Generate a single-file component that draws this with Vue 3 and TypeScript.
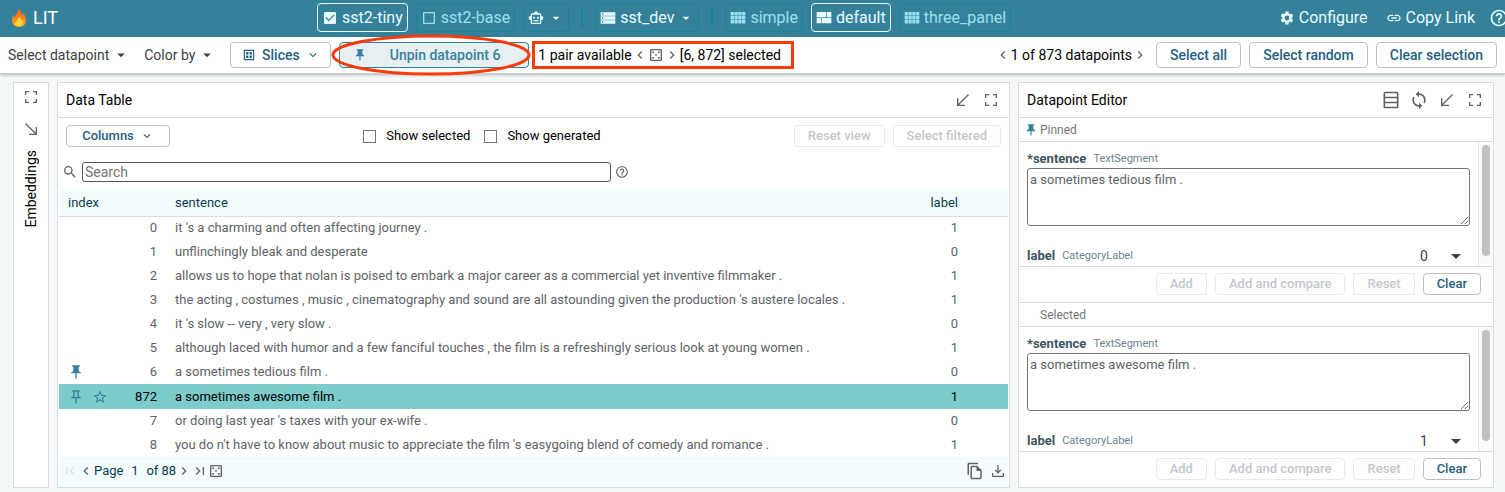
<script setup lang="ts">
import { h, ref } from 'vue'

const paths: Record<string, string> = {
  checked: 'M19 3H5c-1.1 0-2 .9-2 2v14c0 1.1.9 2 2 2h14c1.1 0 2-.9 2-2V5c0-1.1-.9-2-2-2zm-9 14l-5-5 1.4-1.4L10 14.2l7.600-7.600L19 8l-9 9z',
  unchecked: 'M19 5v14H5V5h14m0-2H5c-1.1 0-2 .9-2 2v14c0 1.1.9 2 2 2h14c1.1 0 2-.9 2-2V5c0-1.1-.9-2-2-2z',
  robot: 'M20 9V7c0-1.1-.9-2-2-2h-3c0-1.66-1.34-3-3-3S9 3.34 9 5H6c-1.1 0-2 .9-2 2v2c-1.66 0-3 1.34-3 3s1.34 3 3 3v4c0 1.1.9 2 2 2h12c1.1 0 2-.9 2-2v-4c1.66 0 3-1.34 3-3s-1.34-3-3-3zm-2 10H6V7h12v12zM9 13a1.5 1.5 0 1 1 0-3 1.5 1.5 0 0 1 0 3zm7.5-1.5a1.5 1.5 0 1 1-3 0 1.5 1.5 0 0 1 3 0zM8 15h8v2H8v-2z',
  storage: 'M1 20.5h22v-5H1v5zm2-3.5h2v2H3v-2zM1 3.5v5h22v-5H1zM5 7H3V5h2v2zM1 14.5h22v-5H1v5zm2-3.5h2v2H3v-2z',
  comfy: 'M1 3h4.900v5.200H1zM6.700 3h4.900v5.200H6.700zM12.400 3h4.900v5.200h-4.900zM18.100 3H23v5.200h-4.900zM1 9h4.900v5.200H1zM6.700 9h4.900v5.200H6.700zM12.400 9h4.900v5.200h-4.900zM18.100 9H23v5.200h-4.900zM1 15h4.900v5.200H1zM6.700 15h4.900v5.200H6.700zM12.400 15h4.900v5.200h-4.900zM18.100 15H23v5.200h-4.900z',
  quilt: 'M1 20h7v-8H1v8zm8 0h14v-8H9v8zM1 3v8h14V3H1zm15 0v8h7V3h-7z',
  gear: 'M19.14 12.94c.04-.3.06-.61.06-.94 0-.32-.02-.64-.07-.94l2.03-1.58c.18-.14.23-.41.12-.61l-1.92-3.32c-.12-.22-.37-.29-.59-.22l-2.39.96c-.5-.38-1.03-.7-1.62-.94l-.36-2.54c-.04-.24-.24-.41-.48-.41h-3.84c-.24 0-.43.17-.47.41l-.36 2.54c-.59.24-1.13.57-1.62.94l-2.39-.96c-.22-.08-.47 0-.59.22L2.74 8.87c-.12.21-.08.47.12.61l2.03 1.58c-.05.3-.09.63-.09.94s.02.64.07.94l-2.03 1.58c-.18.14-.23.41-.12.61l1.92 3.32c.12.22.37.29.59.22l2.39-.96c.5.38 1.03.7 1.62.94l.36 2.54c.05.24.24.41.48.41h3.84c.24 0 .44-.17.47-.41l.36-2.54c.59-.24 1.13-.56 1.62-.94l2.39.96c.22.08.47 0 .59-.22l1.92-3.32c.12-.22.07-.47-.12-.61l-2.01-1.58zM12 15.6A3.6 3.6 0 1 1 12 8.4a3.6 3.6 0 0 1 0 7.2z',
  link: 'M3.9 12c0-1.71 1.39-3.1 3.1-3.1h4V7H7c-2.76 0-5 2.24-5 5s2.24 5 5 5h4v-1.9H7c-1.71 0-3.1-1.39-3.1-3.1zM8 13h8v-2H8v2zm9-6h-4v1.900h4c1.710 0 3.100 1.390 3.100 3.100s-1.390 3.100-3.100 3.100h-4V17h4c2.760 0 5-2.240 5-5s-2.240-5-5-5z',
  help: 'M11 18h2v-2h-2v2zm1-16C6.480 2 2 6.480 2 12s4.480 10 10 10 10-4.480 10-10S17.520 2 12 2zm0 18c-4.410 0-8-3.590-8-8s3.590-8 8-8 8 3.590 8 8-3.590 8-8 8zm0-14c-2.210 0-4 1.790-4 4h2c0-1.100.9-2 2-2s2 .9 2 2c0 2-3 1.750-3 5h2c0-2.250 3-2.500 3-5 0-2.210-1.790-4-4-4z',
  drop: 'M7 10l5 5 5-5z',
  down: 'M7.4 8.6L12 13.2l4.6-4.6L18 10l-6 6-6-6z',
  left: 'M15.4 7.4L14 6l-6 6 6 6 1.4-1.4L10.8 12z',
  right: 'M10 6L8.6 7.4l4.6 4.6-4.6 4.6L10 18l6-6z',
  first: 'M18.4 16.6L13.8 12l4.6-4.6L17 6l-6 6 6 6zM6 6h2v12H6z',
  last: 'M5.6 7.4l4.6 4.6-4.6 4.6L7 18l6-6-6-6zM16 6h2v12h-2z',
  slices: 'M3 3v18h18V3H3zm16 16H5V5h14v14zM7 7h4v4H7V7zm6 0h4v4h-4V7zM7 13h4v4H7v-4zm6 0h4v4h-4v-4z',
  pin: 'M16 9V4h1c.55 0 1-.45 1-1s-.45-1-1-1H7c-.55 0-1 .45-1 1s.45 1 1 1h1v5c0 1.66-1.34 3-3 3v2h5.97v7l1 1 1-1v-7H19v-2c-1.66 0-3-1.34-3-3z',
  pinOutline: 'M14 4v5c0 1.12.37 2.16 1 3H9c.65-.86 1-1.9 1-3V4h4m3-2H7c-.55 0-1 .45-1 1s.45 1 1 1h1v5c0 1.66-1.34 3-3 3v2h5.97v7l1 1 1-1v-7H19v-2c-1.66 0-3-1.34-3-3V4h1c.55 0 1-.45 1-1s-.45-1-1-1z',
  star: 'M22 9.24l-7.19-.62L12 2 9.19 8.63 2 9.24l5.46 4.73L5.82 21 12 17.27 18.18 21l-1.63-7.03L22 9.24zM12 15.4l-3.76 2.27 1-4.28-3.32-2.88 4.38-.38L12 6.1l1.71 4.04 4.38.38-3.32 2.88 1 4.28L12 15.4z',
  dice: 'M19 3H5c-1.1 0-2 .9-2 2v14c0 1.1.9 2 2 2h14c1.1 0 2-.9 2-2V5c0-1.1-.9-2-2-2zm0 16H5V5h14v14zM6.5 6.5h2.4v2.4H6.5zM15.1 6.5h2.4v2.4h-2.4zM10.8 10.8h2.4v2.4h-2.4zM6.5 15.1h2.4v2.4H6.5zM15.1 15.1h2.4v2.4h-2.4z',
  full: 'M3 3h6v2H5v4H3V3zm12 0h6v6h-2V5h-4V3zM3 15h2v4h4v2H3v-6zm16 0h2v6h-6v-2h4v-4z',
  shrink: 'M21 4.400L19.600 3 5 17.600V9H3v12h12v-2H6.400z',
  grow: 'M3 4.400L4.400 3 19 17.600V9h2v12H9v-2h8.600z',
  rows: 'M19 2H5c-1.1 0-2 .9-2 2v16c0 1.1.9 2 2 2h14c1.1 0 2-.9 2-2V4c0-1.1-.9-2-2-2zm0 2v4H5V4h14zM5 10h14v4H5v-4zm0 10v-4h14v4H5z',
  sync: 'M12 4V1L8 5l4 4V6c3.31 0 6 2.69 6 6 0 1.01-.25 1.97-.7 2.8l1.46 1.46A7.93 7.93 0 0 0 20 12c0-4.42-3.58-8-8-8zm0 14c-3.31 0-6-2.69-6-6 0-1.01.25-1.97.7-2.8L5.24 7.74A7.93 7.93 0 0 0 4 12c0 4.42 3.58 8 8 8v3l4-4-4-4v3z',
  search: 'M15.5 14h-.79l-.28-.27A6.47 6.47 0 0 0 16 9.5 6.5 6.5 0 1 0 9.5 16c1.61 0 3.09-.59 4.23-1.57l.27.28v.79l5 4.99L20.49 19l-4.99-5zm-6 0a4.5 4.5 0 1 1 0-9 4.5 4.5 0 0 1 0 9z',
  copy: 'M16 1H4c-1.1 0-2 .9-2 2v14h2V3h12V1zm-1 4l6 6v10c0 1.1-.9 2-2 2H8c-1.1 0-2-.9-2-2V7c0-1.1.9-2 2-2h7zM8 7v14h11v-9h-5V7H8z',
  download: 'M19 15v4H5v-4H3v4c0 1.1.9 2 2 2h14c1.1 0 2-.9 2-2v-4h-2zm-2-4l-1.4-1.4-2.6 2.6V3h-2v9.2L8.4 9.6 7 11l5 5 5-5z',
}

const Icon = (props: { name: string; size?: number }) =>
  h('svg', { viewBox: '0 0 24 24', width: props.size ?? 16, height: props.size ?? 16, fill: 'currentColor', 'fill-rule': 'evenodd', 'aria-hidden': 'true' }, [
    h('path', { d: paths[props.name] }),
  ])
Icon.props = ['name', 'size']

interface Row { index: number; sentence: string; label: number; pinned?: boolean; selected?: boolean }
const rows: Row[] = [
  { index: 0, sentence: "it 's a charming and often affecting journey .", label: 1 },
  { index: 1, sentence: 'unflinchingly bleak and desperate', label: 0 },
  { index: 2, sentence: 'allows us to hope that nolan is poised to embark a major career as a commercial yet inventive filmmaker .', label: 1 },
  { index: 3, sentence: "the acting , costumes , music , cinematography and sound are all astounding given the production 's austere locales .", label: 1 },
  { index: 4, sentence: "it 's slow -- very , very slow .", label: 0 },
  { index: 5, sentence: 'although laced with humor and a few fanciful touches , the film is a refreshingly serious look at young women .', label: 1 },
  { index: 6, sentence: 'a sometimes tedious film .', label: 0, pinned: true },
  { index: 872, sentence: 'a sometimes awesome film .', label: 1, selected: true },
  { index: 7, sentence: "or doing last year 's taxes with your ex-wife .", label: 0 },
  { index: 8, sentence: "you do n't have to know about music to appreciate the film 's easygoing blend of comedy and romance .", label: 1 },
]

const editors = ref([
  { id: 'pinned', title: 'Pinned', pinned: true, sentence: 'a sometimes tedious film .', label: '0' },
  { id: 'selected', title: 'Selected', pinned: false, sentence: 'a sometimes awesome film .', label: '1' },
])
const search = ref('')
const page = ref('1')
const showSelected = ref(false)
const showGenerated = ref(false)
</script>

<template>
  <div class="app">
    <header class="topbar">
      <div class="brand">
        <svg class="flame" viewBox="0 0 16 20" width="16" height="20" aria-hidden="true">
          <defs>
            <linearGradient id="flame-outer" x1="0" y1="0" x2="0" y2="1">
              <stop offset="0" stop-color="#f0641e" />
              <stop offset="0.6" stop-color="#f98a1c" />
              <stop offset="1" stop-color="#f6a623" />
            </linearGradient>
          </defs>
          <path fill="url(#flame-outer)" d="M7 1c3 1.500 4 4 4 6.500.8-.5 1-1.500.9-2.500C14 7 15 9.500 15 12.500c0 4-3 6.500-7 6.500s-7-2.500-7-6.300C1 10 2 8 3 6.500c0 1.500.4 2.500 1.200 3C4.500 6 7.500 4.500 7 1z" />
          <path fill="#ffd83d" d="M8.200 8c.3 2 2.600 3 2.600 5 .5-.3.8-.8.8-1.500 1.200 2.500 1.200 6.700-3.600 6.700-3.400 0-4.800-2.200-4.300-5 .4.8.9 1.300 1.500 1.400C5 12 8 11 8.200 8z" />
        </svg>
        <span>LIT</span>
      </div>
      <nav class="picks" aria-label="Models, dataset and layout">
        <button type="button" class="pick on" aria-pressed="true"><Icon name="checked" />sst2-tiny</button>
        <button type="button" class="pick" aria-pressed="false"><Icon name="unchecked" />sst2-base</button>
        <button type="button" class="pick bright" aria-label="Models"><Icon name="robot" /><Icon name="drop" /></button>
        <span class="bar"></span>
        <button type="button" class="pick bright" aria-haspopup="true"><Icon name="storage" />sst_dev<Icon name="drop" /></button>
        <span class="bar"></span>
        <button type="button" class="pick" aria-pressed="false"><Icon name="comfy" />simple</button>
        <button type="button" class="pick on" aria-pressed="true"><Icon name="quilt" />default</button>
        <button type="button" class="pick" aria-pressed="false"><Icon name="comfy" />three_panel</button>
      </nav>
      <div class="global">
        <button type="button" class="plain"><Icon name="gear" />Configure</button>
        <button type="button" class="plain"><Icon name="link" />Copy Link</button>
        <button type="button" class="plain" aria-label="Help"><Icon name="help" :size="20" /></button>
      </div>
    </header>

    <div class="toolbar">
      <button type="button" class="menu" aria-haspopup="true">Select datapoint<Icon name="drop" :size="18" /></button>
      <button type="button" class="menu" aria-haspopup="true">Color by<Icon name="drop" :size="18" /></button>
      <button type="button" class="btn slices" aria-haspopup="true"><Icon name="slices" :size="14" />Slices<Icon name="down" :size="14" /></button>
      <div class="pin-wrap">
        <button type="button" class="btn unpin"><Icon name="pin" :size="14" /><span>Unpin datapoint 6</span></button>
        <svg class="ring" viewBox="0 0 200 42" aria-hidden="true"><ellipse cx="100" cy="21" rx="98" ry="19" /></svg>
      </div>
      <div class="pairs">
        <span>1 pair available</span>
        <button type="button" class="ico" aria-label="Previous pair"><Icon name="left" /></button>
        <button type="button" class="ico" aria-label="Random pair"><Icon name="dice" /></button>
        <button type="button" class="ico" aria-label="Next pair"><Icon name="right" /></button>
        <span>[6, 872] selected</span>
      </div>
      <div class="selection">
        <div class="stepper">
          <button type="button" class="ico" aria-label="Previous datapoint"><Icon name="left" /></button>
          <span>1 of 873 datapoints</span>
          <button type="button" class="ico" aria-label="Next datapoint"><Icon name="right" /></button>
        </div>
        <button type="button" class="btn">Select all</button>
        <button type="button" class="btn">Select random</button>
        <button type="button" class="btn">Clear selection</button>
      </div>
    </div>

    <main class="main">
      <aside class="panel side">
        <button type="button" class="ico" aria-label="Full screen"><Icon name="full" /></button>
        <button type="button" class="ico" aria-label="Expand"><Icon name="grow" /></button>
        <h2 class="title upright">Embeddings</h2>
      </aside>

      <section class="panel data">
        <div class="head">
          <h2 class="title">Data Table</h2>
          <button type="button" class="ico" aria-label="Minimize"><Icon name="shrink" /></button>
          <button type="button" class="ico" aria-label="Full screen"><Icon name="full" /></button>
        </div>
        <div class="controls">
          <button type="button" class="btn small columns" aria-haspopup="true">Columns<Icon name="down" :size="14" /></button>
          <div class="checks">
            <label><input v-model="showSelected" type="checkbox" />Show selected</label>
            <label><input v-model="showGenerated" type="checkbox" />Show generated</label>
          </div>
          <div class="actions">
            <button type="button" class="btn small" disabled>Reset view</button>
            <button type="button" class="btn small" disabled>Select filtered</button>
          </div>
        </div>
        <div class="search">
          <Icon name="search" />
          <input v-model="search" type="text" placeholder="Search" aria-label="Search" />
          <button type="button" class="ico" aria-label="Search help"><Icon name="help" :size="14" /></button>
        </div>
        <div class="grid">
          <table>
            <colgroup><col class="c-index" /><col /><col class="c-label" /></colgroup>
            <thead>
              <tr><th scope="col">index</th><th scope="col">sentence</th><th scope="col" class="num">label</th></tr>
            </thead>
            <tbody>
              <tr v-for="row in rows" :key="row.index" :class="{ selected: row.selected }">
                <td>
                  <div class="index">
                    <button v-if="row.pinned || row.selected" type="button" class="ico mark" aria-label="Pin"><Icon :name="row.pinned ? 'pin' : 'pinOutline'" /></button>
                    <button v-if="row.selected" type="button" class="ico mark" aria-label="Star"><Icon name="star" /></button>
                    <span>{{ row.index }}</span>
                  </div>
                </td>
                <td>{{ row.sentence }}</td>
                <td class="num">{{ row.label }}</td>
              </tr>
            </tbody>
          </table>
          <div class="foot">
            <button type="button" class="ico" disabled aria-label="First page"><Icon name="first" /></button>
            <button type="button" class="ico" aria-label="Previous page"><Icon name="left" /></button>
            <label class="page">Page<input v-model="page" type="text" /></label>
            <span>of 88</span>
            <button type="button" class="ico" aria-label="Next page"><Icon name="right" /></button>
            <button type="button" class="ico" aria-label="Last page"><Icon name="last" /></button>
            <button type="button" class="ico" aria-label="Random page"><Icon name="dice" /></button>
            <span class="grow"></span>
            <button type="button" class="ico big" aria-label="Copy table"><Icon name="copy" :size="18" /></button>
            <button type="button" class="ico big" aria-label="Download table"><Icon name="download" /></button>
          </div>
        </div>
      </section>

      <section class="panel editor">
        <div class="head">
          <h2 class="title">Datapoint Editor</h2>
          <button type="button" class="ico" aria-label="Row layout"><Icon name="rows" :size="20" /></button>
          <button type="button" class="ico" aria-label="Sync"><Icon name="sync" :size="20" /></button>
          <button type="button" class="ico" aria-label="Minimize"><Icon name="shrink" /></button>
          <button type="button" class="ico" aria-label="Full screen"><Icon name="full" /></button>
        </div>
        <div v-for="item in editors" :key="item.id" class="point">
          <h3 class="sub"><span class="slot"><Icon v-if="item.pinned" name="pin" :size="14" /></span>{{ item.title }}</h3>
          <div class="scroll">
            <div class="fields">
              <label class="field" :for="item.id + '-sentence'"><b>*sentence</b><small>TextSegment</small></label>
              <textarea :id="item.id + '-sentence'" v-model="item.sentence"></textarea>
              <div class="choice">
                <label class="field" :for="item.id + '-label'"><b>label</b><small>CategoryLabel</small></label>
                <div class="select">
                  <select :id="item.id + '-label'" v-model="item.label"><option>0</option><option>1</option></select>
                  <Icon name="drop" :size="24" />
                </div>
              </div>
            </div>
            <div class="track"><div class="thumb"></div></div>
          </div>
          <div class="buttons">
            <button type="button" class="btn small" disabled>Add</button>
            <button type="button" class="btn small" disabled>Add and compare</button>
            <button type="button" class="btn small" disabled>Reset</button>
            <button type="button" class="btn small">Clear</button>
          </div>
        </div>
      </section>
    </main>
  </div>
</template>

<style>
html, body, #app { height: 100%; }
body { margin: 0; overflow: hidden; }
</style>

<style scoped>
.app, .app * { box-sizing: border-box; }
.app {
  display: flex;
  flex-direction: column;
  height: 100%;
  background: #f4f8f9;
  color: #000;
  font: 14px/20px Roboto, sans-serif;
}
svg { display: block; flex: none; }
button, input, textarea, select { margin: 0; font: inherit; color: inherit; }
button { display: flex; align-items: center; padding: 0; border: 0; background: none; white-space: nowrap; }
h2, h3 { margin: 0; font-weight: 400; }

.topbar { display: flex; flex: none; height: 37px; padding-bottom: 2px; align-items: center; background: #36819a; color: #e6fcff; font-size: 16px; }
.brand { display: flex; width: 317px; padding-left: 11px; gap: 6px; align-items: center; color: #fff; font-size: 18px; }
.picks { display: flex; gap: 8px; align-items: center; }
.pick { height: 29px; padding: 0 4px; gap: 4px; border: 1px solid #148790; border-radius: 4px; color: #97e2ef; }
.pick.on { border-color: #e6fcff; color: #e6fcff; }
.pick.bright { color: #e6fcff; }
.bar { width: 2px; height: 20px; margin: 0 4px; background: #148790; }
.global { display: flex; margin-left: auto; gap: 18px; align-items: center; overflow: hidden; }
.plain { gap: 4px; }
.plain:last-child { margin: 0 -4px 0 -4px; }

.toolbar { position: relative; z-index: 1; display: flex; flex: none; height: 37px; padding: 0 8px; align-items: center; background: #fff; border-bottom: 1px solid #ccc; box-shadow: 0 1px 3px #0004; }
.menu { gap: 3px; margin-right: 14px; color: #3c4043; }
.btn { justify-content: center; height: 26px; padding: 0 13px; gap: 6px; border: 1px solid #bdc1c6; border-radius: 4px; background: #fff; color: #1f6180; font-weight: 500; }
.btn:disabled { border-color: #e8eaed; color: #c4c7cb; }
.btn.small { height: 22px; font-size: 13px; }
.slices { width: 101px; }
.pin-wrap { position: relative; margin-left: 8px; }
.unpin { width: 190px; padding: 0 28px 0 13px; background: #e6f0f3; border-color: #36819a; color: #36819a; }
.unpin span { flex: 1; text-align: right; }
.ring { position: absolute; left: -8px; top: -8px; width: 200px; height: 42px; fill: none; stroke: #f63c0a; stroke-width: 3px; }
.pairs { display: flex; height: 28px; width: 262px; margin-left: 3px; padding-left: 3px; align-items: center; border: 3px solid #f63c0a; white-space: nowrap; }
.ico { display: flex; justify-content: center; color: #5f6368; }
.selection { display: flex; margin-left: auto; gap: 8px; align-items: center; }
.stepper { display: flex; align-items: center; }

.main { display: flex; flex: 1; min-height: 0; padding: 8px 11px 4px 13px; gap: 8px; }
.panel { display: flex; flex-direction: column; min-width: 0; border: 1px solid #dadce0; background: #fff; }
.side { width: 36px; padding-top: 6px; gap: 16px; align-items: center; }
.title { font-size: 14px; }
.upright { margin-top: -3px; writing-mode: vertical-rl; transform: rotate(180deg); }
.data { flex: 1; }
.editor { flex: 0 1 476px; }
.head { display: flex; flex: none; height: 35px; padding: 0 10px 0 8px; gap: 12px; align-items: center; border-bottom: 1px solid #dadce0; }
.head .title { flex: 1; }
.head .ico { width: 16px; }
.controls { display: flex; justify-content: space-between; height: 36px; padding: 0 8px; align-items: center; font-size: 13px; }
.columns { width: 104px; }
.checks { display: flex; gap: 14px; }
.actions { display: flex; gap: 8px; }
.checks label { display: flex; gap: 10px; align-items: center; }
.checks input { width: 13px; height: 13px; appearance: none; border: 1px solid #767676; background: #fff; }
.search { display: flex; height: 36px; padding: 0 4px; gap: 4px; align-items: center; color: #5f6368; }
.search input { width: 529px; height: 20px; padding: 0 2px; border: 1px solid #555; border-radius: 3px; color: #333; outline: 0; }
.search input::placeholder { color: #757575; }
.grid { display: flex; flex: 1; flex-direction: column; padding: 0 1px; font-size: 13px; }
table { width: 100%; table-layout: fixed; border-collapse: collapse; color: #5f6368; }
.c-index { width: 106px; }
.c-label { width: 80px; }
th { height: 26px; padding: 0 9px; background: #f3fcfc; border-bottom: 1px solid #dadce0; color: #0b3d4f; font-weight: 400; text-align: left; }
th:nth-child(2), td:nth-child(2) { padding: 0 0 0 10px; white-space: nowrap; overflow: hidden; text-overflow: ellipsis; }
td { height: 24px; padding: 0 8px 0 9px; }
.num { padding: 0 50px 0 0; text-align: right; }
.selected td { height: 25px; background: #7bcccb; color: #000; }
.index { display: flex; gap: 8px; align-items: center; }
.index span { margin-left: auto; }
.mark { color: #36819a; }
.foot { display: flex; flex: 1; padding: 0 2px 3px 3px; align-items: center; background: #f3fcfc; color: #0b3d4f; }
.foot .ico:disabled { color: #dadce0; }
.page { display: flex; align-items: center; }
.page input { width: 23px; padding: 0; border: 0; background: none; text-align: center; }
.grow { flex: 1; }
.foot .big { margin-left: 6px; }

.point { display: flex; flex: 1; flex-direction: column; min-height: 0; }
.point + .point { border-top: 1px solid #dadce0; }
.sub { display: flex; flex: none; height: 24px; padding-left: 5px; align-items: center; border-bottom: 1px solid #dadce0; color: #757575; font-size: 12px; }
.slot { width: 16px; color: #36819a; }
.scroll { display: flex; flex: 1; min-height: 0; overflow: hidden; border-bottom: 1px solid #dadce0; }
.fields { flex: 1; padding: 8px 8px 0; }
.field { display: flex; gap: 7px; align-items: center; color: #3d5560; font-size: 13px; line-height: 18px; }
.field small { color: #6c848e; font-size: 11px; }
textarea { display: block; width: 100%; height: 58px; padding: 1px 2px; border: 1px solid #767676; border-radius: 3px; background: #fff; color: #5f6368; font-size: 13px; outline: 0; }
.choice { display: flex; height: 20px; margin-top: 20px; justify-content: space-between; align-items: center; }
.select { display: flex; margin-right: 2px; align-items: center; color: #3c4043; }
.select select { width: 36px; height: 20px; margin-right: -12px; padding: 0; appearance: none; border: 0; background: none; }
.track { width: 15px; padding: 3px; background: #fafafa; border-left: 1px solid #e8e8e8; }
.thumb { width: 8px; height: 111px; border-radius: 4px; background: #c1c1c1; }
.buttons { display: flex; flex: none; height: 35px; padding: 0 12px 1px; gap: 8px; justify-content: flex-end; align-items: center; }
</style>
